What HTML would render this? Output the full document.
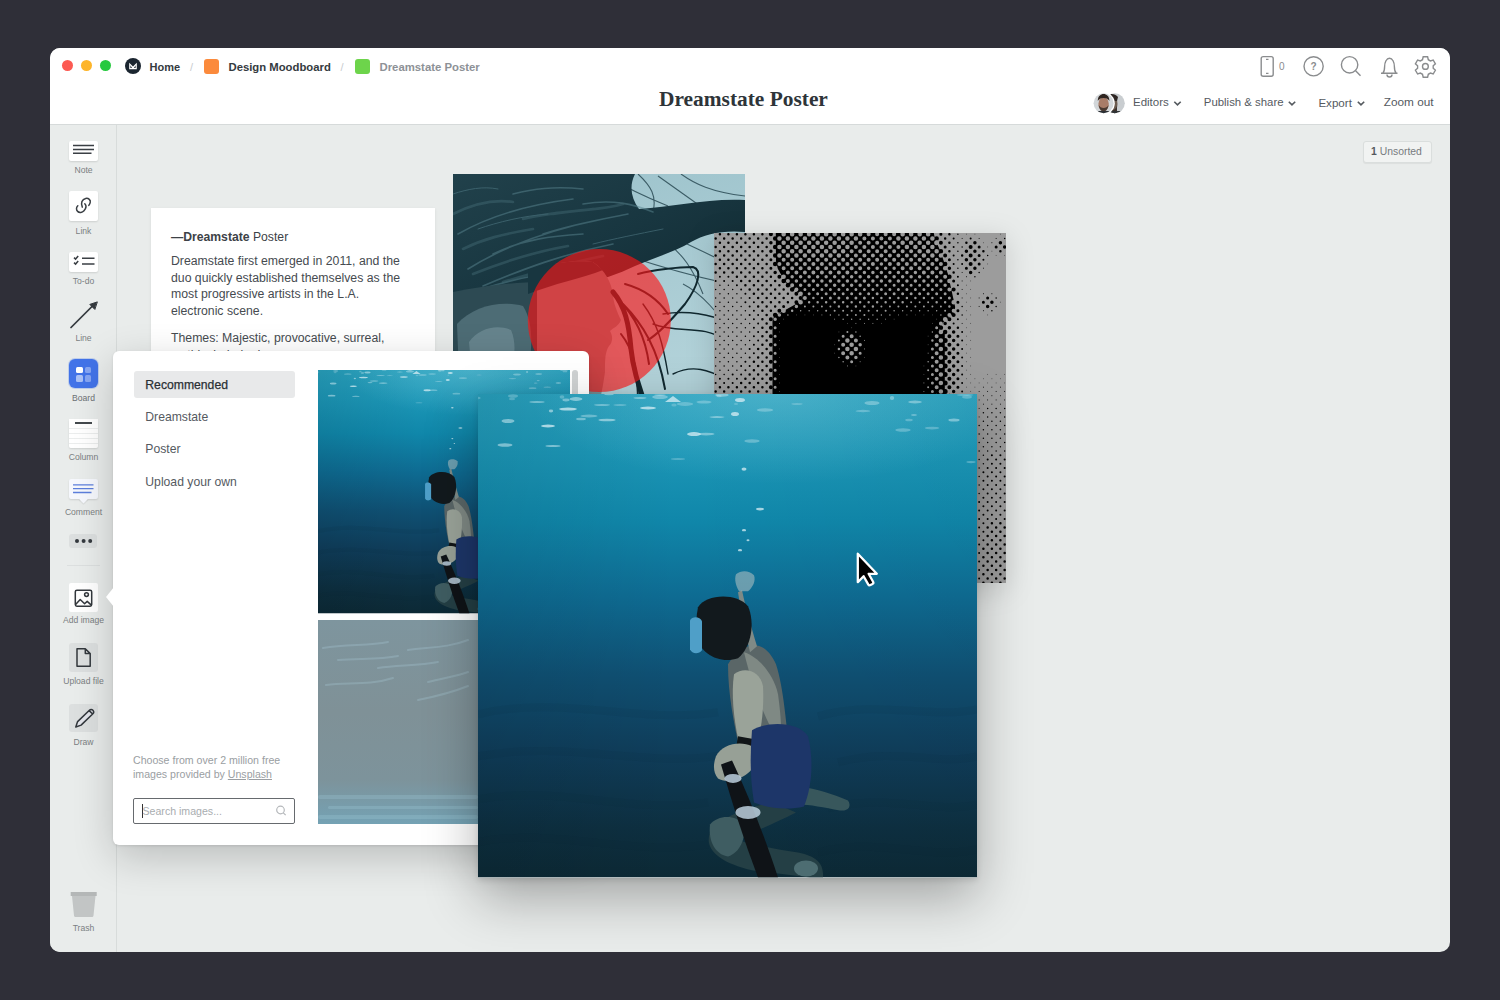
<!DOCTYPE html>
<html><head><meta charset="utf-8">
<style>
*{box-sizing:border-box}
html,body{margin:0;padding:0}
body{width:1500px;height:1000px;background:#2f2f38;overflow:hidden;position:relative;font-family:"Liberation Sans",sans-serif}
.a{position:absolute}
#win{position:absolute;left:0;top:0;width:1500px;height:1000px;clip-path:inset(48px 50px 48px 50px round 10px);background:#e9eceb}
.t{position:absolute;white-space:nowrap;line-height:1}
.tool{position:absolute;left:69px;width:29px;border-radius:2px;background:#fff;box-shadow:0 1px 2px rgba(0,0,0,.12)}
.lbl{position:absolute;left:50px;width:67px;text-align:center;font-size:8.6px;color:#7b7f82;line-height:1;white-space:nowrap}
</style></head>
<body>
<div id="win">
  <!-- header -->
  <div class="a" style="left:50px;top:48px;width:1400px;height:77px;background:#fff;border-bottom:1px solid #d6dada"></div>
  <!-- traffic lights -->
  <div class="a" style="left:62px;top:60px;width:11px;height:11px;border-radius:50%;background:#fc5a52"></div>
  <div class="a" style="left:81px;top:60px;width:11px;height:11px;border-radius:50%;background:#fdb52a"></div>
  <div class="a" style="left:99.5px;top:60px;width:11px;height:11px;border-radius:50%;background:#27c93f"></div>
  <!-- logo -->
  <svg class="a" style="left:125px;top:58px" width="16" height="16" viewBox="0 0 16 16"><circle cx="8" cy="8" r="8" fill="#1b2530"/><path d="M4.2 4.8 L8 8.6 L11.8 4.8 V11.2 H4.2 Z M5.4 7.2 V10 H7 Z M10.6 7.2 V10 H9 Z" fill="#fff" fill-rule="evenodd"/></svg>
  <div class="t" style="left:149.5px;top:62px;font-size:11px;font-weight:bold;color:#343a40">Home</div>
  <div class="t" style="left:190px;top:62px;font-size:11px;color:#c9cccf">/</div>
  <div class="a" style="left:204px;top:59px;width:15px;height:15px;border-radius:3px;background:#fb8a3c"></div>
  <div class="t" style="left:228.5px;top:62px;font-size:11.3px;font-weight:bold;color:#343a40">Design Moodboard</div>
  <div class="t" style="left:340.5px;top:62px;font-size:11px;color:#c9cccf">/</div>
  <div class="a" style="left:355px;top:59px;width:15px;height:15px;border-radius:3px;background:#6dd44b"></div>
  <div class="t" style="left:379.5px;top:62px;font-size:11.35px;font-weight:bold;color:#8d9196">Dreamstate Poster</div>
  <!-- title -->
  <div class="t" style="left:659px;top:89px;font-size:21.4px;font-weight:bold;font-family:'Liberation Serif',serif;color:#2e3439">Dreamstate Poster</div>

  <!-- right icons -->
  <svg class="a" style="left:1250px;top:50px" width="200" height="35" viewBox="1250 50 200 35" fill="none" stroke="#8a8c8e" stroke-width="1.4">
    <rect x="1261.2" y="56.6" width="12" height="19.6" rx="2"/>
    <path d="M1266 59.4h2.5M1266 73.4h2.5" stroke-width="1.1"/>
    <circle cx="1313.6" cy="66.3" r="9.6"/>
    <circle cx="1349.6" cy="64.8" r="8.2"/>
    <path d="M1355.6 70.8L1360.5 75.7"/>
    <path d="M1381 73.2h16.5M1382.8 73.2c1.5-1.5 1.8-3 1.8-6.5c0-4.5 2-8.5 4.9-8.5s4.9 4 4.9 8.5c0 3.5.3 5 1.8 6.5M1387 74.5a2.3 2.3 0 0 0 5 0"/>
    <path d="M1423.2 56.8h4.4l.7 2.9 2.1 1.2 2.8-.9 2.2 3.8-2.2 2v2.4l2.2 2-2.2 3.8-2.8-.9-2.1 1.2-.7 2.9h-4.4l-.7-2.9-2.1-1.2-2.8.9-2.2-3.8 2.2-2v-2.4l-2.2-2 2.2-3.8 2.8.9 2.1-1.2z"/>
    <circle cx="1425.4" cy="66.4" r="2.9"/>
  </svg>
  <div class="t" style="left:1279px;top:62px;font-size:10px;color:#8a8c8e">0</div>
  <div class="t" style="left:1310.4px;top:61.5px;font-size:10px;font-weight:bold;color:#8a8c8e">?</div>

  <!-- row 2 -->
  <svg class="a" style="left:1090px;top:90px" width="40" height="26" viewBox="1090 90 40 26">
    <defs><clipPath id="av2"><circle cx="1114.8" cy="103.3" r="10"/></clipPath><clipPath id="av1"><circle cx="1103.6" cy="103.3" r="10"/></clipPath></defs>
    <g clip-path="url(#av2)"><rect x="1100" y="90" width="30" height="26" fill="#c9cdd0"/><ellipse cx="1112" cy="104" rx="5.5" ry="8" fill="#6b5a4e"/><path d="M1105 97c3-4 10-4 13 0l-1 4h-11z" fill="#2e2623"/><path d="M1106 106c2 5 9 6 11 0v8h-11z" fill="#3b302b"/><rect x="1103" y="111" width="20" height="6" fill="#2f3336"/></g>
    <circle cx="1103.6" cy="103.3" r="11.2" fill="#fff"/>
    <g clip-path="url(#av1)"><rect x="1090" y="90" width="30" height="26" fill="#d2d6d9"/><ellipse cx="1103.6" cy="104" rx="5.2" ry="6.6" fill="#a87c68"/><path d="M1097.8 101c0-5 3-7 5.8-7s5.8 2 5.8 7c-1-2-3-3-5.8-3s-4.8 1-5.8 3z" fill="#2f2520"/><path d="M1098.6 105c1 5 3 6.5 5 6.5s4-1.5 5-6.5c-1 2-3 3-5 3s-4-1-5-3z" fill="#4a3a32"/><rect x="1093" y="111" width="22" height="6" fill="#2c3034"/></g>
  </svg>
  <div class="t" style="left:1133px;top:97px;font-size:11.5px;color:#555a5f">Editors</div>
  <div class="t" style="left:1203.8px;top:97px;font-size:11.4px;color:#555a5f">Publish &amp; share</div>
  <div class="t" style="left:1318.4px;top:97px;font-size:11.6px;color:#555a5f">Export</div>
  <div class="t" style="left:1383.8px;top:97px;font-size:11.8px;color:#555a5f">Zoom out</div>
  <svg class="a" style="left:1170px;top:98px" width="200" height="12" viewBox="1170 98 200 12" fill="none" stroke="#555a5f" stroke-width="1.6">
    <path d="M1174.3 101.8l3.2 3.1 3.2-3.1M1288.8 101.8l3.2 3.1 3.2-3.1M1357.8 101.8l3.2 3.1 3.2-3.1"/>
  </svg>

  <!-- unsorted -->
  <div class="a" style="left:1363.3px;top:141px;width:69px;height:22px;border-radius:3px;background:#f1f3f2;border:1px solid #dadedd;box-shadow:0 1px 1px rgba(0,0,0,.06)"></div>
  <div class="t" style="left:1371px;top:147px;font-size:10.4px;color:#777b7f"><b style="color:#55595d">1</b> Unsorted</div>

  <!-- sidebar -->
  <div class="a" style="left:50px;top:125px;width:67px;height:827px;background:#e9eceb;border-right:1px solid #d8dcdb"></div>

  <!-- sidebar tools -->
  <div class="tool" style="top:140.5px;height:20.5px"></div>
  <svg class="a" style="left:72px;top:143px" width="24" height="13" viewBox="72 143 24 13" stroke="#3a3f44" stroke-width="1.5"><path d="M73 145.4h21M73 149.6h21M73 153.3h18.5"/></svg>
  <div class="lbl" style="top:166px">Note</div>

  <div class="tool" style="top:191px;height:30px"></div>
  <svg class="a" style="left:72px;top:194px" width="22" height="22" viewBox="72 194 22 22" fill="none" stroke="#3a3f44" stroke-width="1.5" stroke-linecap="round"><path d="M82.3 207.1C80.5 203.2 82 199.2 85.7 198.4C88.5 197.9 91 200 90.2 202.6C89.9 203.8 89.4 204.6 88.8 205.4"/><path d="M77.8 205.7C76.2 207.2 76 210 77.6 211.4C79.3 213.1 82.3 212.6 84 210.7C86.2 208.2 86.5 205.5 84.8 203.8"/></svg>
  <div class="lbl" style="top:227px">Link</div>

  <div class="tool" style="top:251.5px;height:20.5px"></div>
  <svg class="a" style="left:72px;top:254px" width="24" height="16" viewBox="72 254 24 16" fill="none" stroke="#3a3f44" stroke-width="1.5"><path d="M74 257.6l1.6 1.5 2.6-3M74 262.6l1.6 1.5 2.6-3M82 258.3h12.5M82 264h12.5"/></svg>
  <div class="lbl" style="top:277px">To-do</div>

  <svg class="a" style="left:66px;top:298px" width="36" height="34" viewBox="66 298 36 34" fill="none" stroke="#33383d" stroke-width="1.7" stroke-linecap="round"><path d="M71 327.5L94 304.5"/><path d="M97 302l-7.2 2.4l4.8 4.8z" fill="#33383d" stroke-width="1"/></svg>
  <div class="lbl" style="top:334px">Line</div>

  <div class="a" style="left:68.8px;top:358.8px;width:29.7px;height:29.7px;border-radius:6px;background:#4273e8;box-shadow:0 0 0 1px rgba(66,115,232,.25)"></div>
  <div class="a" style="left:76px;top:366.5px;width:6.5px;height:6.5px;border-radius:1.5px;background:#fff"></div>
  <div class="a" style="left:84.8px;top:366.5px;width:6.5px;height:6.5px;border-radius:1.5px;background:#86a5f2"></div>
  <div class="a" style="left:76px;top:375.3px;width:6.5px;height:6.5px;border-radius:1.5px;background:#aac1f6"></div>
  <div class="a" style="left:84.8px;top:375.3px;width:6.5px;height:6.5px;border-radius:1.5px;background:#86a5f2"></div>
  <div class="lbl" style="top:394px;color:#6c7074">Board</div>

  <div class="tool" style="top:418.8px;height:29.7px;background:repeating-linear-gradient(#fff 0,#fff 4px,#ebeded 4px,#ebeded 5px)"></div>
  <div class="a" style="left:69px;top:418.8px;width:29px;height:7px;background:#fff"></div>
  <div class="a" style="left:75px;top:422px;width:17px;height:1.6px;background:#44494d"></div>
  <div class="lbl" style="top:453px">Column</div>

  <div class="tool" style="left:69.3px;width:28.7px;top:479px;height:20px;background:#f6f8fd"></div>
  <div class="a" style="left:80px;top:495px;width:7px;height:7px;background:#f6f8fd;transform:rotate(45deg);box-shadow:1px 1px 1px rgba(0,0,0,.08)"></div>
  <svg class="a" style="left:72px;top:482px" width="24" height="13" viewBox="72 482 24 13" stroke="#5d7fdc" stroke-width="1.3"><path d="M73 484.8h20.5M73 488.6h20.5M73 492.5h18.5"/></svg>
  <div class="lbl" style="top:508px">Comment</div>

  <div class="a" style="left:69.3px;top:534.3px;width:28px;height:13.7px;border-radius:3px;background:#dcdfdf"></div>
  <svg class="a" style="left:72px;top:536px" width="24" height="10" viewBox="72 536 24 10" fill="#353a3f"><circle cx="77" cy="541" r="2"/><circle cx="83.6" cy="541" r="2"/><circle cx="90.2" cy="541" r="2"/></svg>
  <div class="a" style="left:67px;top:565px;width:33px;height:1px;background:#dcdfdf"></div>

  <div class="tool" style="top:583.2px;height:29.2px;box-shadow:none"></div>
  <svg class="a" style="left:74px;top:589px" width="19" height="19" viewBox="74 589 19 19" fill="none" stroke="#33383d" stroke-width="1.5" stroke-linejoin="round"><rect x="75.3" y="590.2" width="16.4" height="16"  rx="1.6"/><circle cx="86.5" cy="594.6" r="1.9"/><path d="M75.6 604.6l4.6-5.1 4.4 4.2 2.6-2.3 4.4 4"/></svg>
  <div class="lbl" style="top:616px">Add image</div>

  <div class="a" style="left:68.8px;top:643.2px;width:29px;height:28.6px;border-radius:3px;background:#dcdfdf"></div>
  <svg class="a" style="left:75px;top:647px" width="17" height="21" viewBox="75 647 17 21" fill="none" stroke="#33383d" stroke-width="1.5" stroke-linejoin="round"><path d="M77 648.7h8.3l4.9 4.9v12.6H77z M85.3 648.7v4.9h4.9"/></svg>
  <div class="lbl" style="top:677px">Upload file</div>

  <div class="a" style="left:69.4px;top:704px;width:28.3px;height:28px;border-radius:3px;background:#dcdfdf"></div>
  <svg class="a" style="left:74px;top:708px" width="21" height="21" viewBox="74 708 21 21" fill="#e2e4ea" stroke="#33383d" stroke-width="1.5" stroke-linejoin="round"><path d="M75.8 727l1.8-5.4 11.8-11.4c1-1 2.6-1 3.5 0s1 2.5 0 3.5l-11.8 11.4z M89.2 710.6l3.4 3.4"/></svg>
  <div class="lbl" style="top:738px">Draw</div>

  <svg class="a" style="left:70px;top:891px" width="28" height="27" viewBox="70 891 28 27"><path d="M70.7 892h26v4h-26z" fill="#b4b7b7"/><path d="M72 896h23.5l-2 19.5c-.1 1-.9 1.5-1.8 1.5h-15.9c-.9 0-1.7-.5-1.8-1.5z" fill="#c2c5c5"/></svg>
  <div class="lbl" style="top:924px">Trash</div>

  <!-- note card -->
  <div class="a" style="left:151px;top:208px;width:283.5px;height:200px;background:#fff;box-shadow:0 1px 3px rgba(0,0,0,.08)"></div>
  <div class="t" style="left:171px;top:231px;font-size:12.2px;color:#3d4247"><b>—Dreamstate</b> Poster</div>
  <div class="a" style="left:171px;top:252.6px;width:240px;font-size:12.27px;line-height:16.9px;color:#464b50">Dreamstate first emerged in 2011, and the duo quickly established themselves as the most progressive artists in the L.A. electronic scene.</div>
  <div class="t" style="left:171px;top:331.5px;font-size:12.27px;color:#464b50">Themes: Majestic, provocative, surreal,</div>
  <div class="t" style="left:171px;top:348.5px;font-size:12.27px;color:#464b50">mythical, dark, dreamy</div>

  <!-- woman image -->
  <svg class="a" style="left:453px;top:174px" width="292" height="230" viewBox="0 0 292 230">
    <defs>
      <linearGradient id="wbg" x1="0" y1="0" x2="0.3" y2="1">
        <stop offset="0" stop-color="#9cc2cb"/><stop offset="1" stop-color="#b2d2d9"/>
      </linearGradient>
      <linearGradient id="whair" x1="0" y1="0" x2="1" y2="1">
        <stop offset="0" stop-color="#21414b"/><stop offset="0.5" stop-color="#183640"/><stop offset="1" stop-color="#10282f"/>
      </linearGradient>
    </defs>
    <rect width="292" height="230" fill="url(#wbg)"/>
    <g stroke="#2a4a53" stroke-width="1.1" fill="none" opacity=".85">
      <path d="M150 0C175 15 190 22 215 32M185 0C198 12 204 22 200 38M205 2L250 34M228 0C242 10 258 18 292 22M150 30C200 55 240 72 292 98M175 82C205 92 240 102 268 108M210 65C230 80 240 95 250 120M230 110C250 120 265 140 280 160"/>
    </g>
    <path d="M0 0H182C176 12 178 24 186 35C220 33 255 24 292 26V58C270 56 252 60 238 68C222 78 200 84 182 92C165 100 148 106 130 110C100 116 70 120 40 126C25 130 10 136 0 142Z" fill="url(#whair)"/>
    <g stroke="#5a8590" fill="none" opacity=".5" stroke-linecap="round">
      <path d="M5 60C40 40 80 30 120 25M15 95C55 70 100 55 150 45M30 112C70 95 110 80 160 70M60 20C80 15 100 12 130 15M90 60C120 50 150 45 175 40M0 125C40 110 80 100 120 96M40 80C70 65 100 62 130 60M130 30C160 25 180 30 200 38" stroke-width="1.6"/>
      <path d="M0 40C20 30 40 25 60 28M10 75C30 65 50 60 80 55M20 100C50 88 80 78 115 72M50 108C90 96 120 88 150 82M100 40C130 35 150 36 170 30M70 45C90 40 110 38 140 35" stroke-width="2.6" opacity=".6"/>
      <path d="M0 20C15 15 30 12 45 15M140 70C160 65 185 60 210 55M25 55C45 48 70 42 95 40" stroke-width="1"/>
    </g>
    <path d="M0 118C30 112 60 108 90 108L95 230H0Z" fill="#2d4a53"/>
    <path d="M4 150C20 132 48 126 70 132C82 150 80 185 70 212C50 222 20 218 6 200Z" fill="#4d6c75"/>
    <path d="M16 168C26 154 44 150 58 156C64 170 62 188 54 198C42 204 26 200 18 190Z" fill="#6d8b93" opacity=".8"/>
    <path d="M84 96C100 88 125 86 140 88C152 96 158 108 160 120C160 128 164 138 168 146C166 152 160 154 157 157C160 162 160 168 156 172C152 178 152 186 152 198C150 212 148 222 146 230H84Z" fill="#7c969c"/>
    <path d="M75 96C100 88 125 86 140 88L150 96C130 104 100 110 75 120Z" fill="#183640"/>
    <g stroke="#10282f" fill="none" stroke-linecap="round">
      <path d="M160 118C172 132 176 150 178 175C180 195 186 212 192 230" stroke-width="5"/>
      <path d="M165 125C180 140 192 160 196 190M170 130C190 150 205 175 212 215M168 160C180 175 185 195 185 230M172 110C190 115 205 125 215 140" stroke-width="2"/>
      <path d="M185 100C200 96 225 93 240 93C250 96 245 112 232 130C215 150 205 160 195 166" stroke-width="2"/>
      <path d="M200 150C225 160 250 150 272 166M210 140C235 136 255 140 282 150M220 200C240 190 255 196 276 206M190 130C205 150 210 170 215 200" stroke-width="1.4"/>
    </g>
    <circle cx="146.3" cy="146.5" r="71.5" fill="#ff1414" opacity=".64"/>
  </svg>

  <!-- halftone image -->
  <svg class="a" style="left:713.6px;top:232.8px;filter:drop-shadow(0 6px 14px rgba(0,0,0,.15))" width="292.4" height="350.5" viewBox="0 0 292.4 350.5">
    <rect width="292.4" height="350.5" fill="#9c9c9c"/>
    <g stroke-linecap="round">
<path fill="#000" fill-rule="evenodd" d="M61.8 0.0 62.0 28.2 63.8 35.8 71.5 49.5 85.8 60.8 88.2 63.5 88.5 65.8 85.2 69.2 61.8 82.2 59.5 84.8 58.5 88.0 58.5 350.8 230.8 350.8 230.8 100.0 225.0 96.5 229.8 88.8 240.0 80.0 241.2 74.0 234.0 41.2 227.0 19.8 220.8 5.0 219.8 0.0Z"/>
<path stroke="#000" stroke-width="0.5" d="M256.65 -3.05h0M252.40 1.20h0M260.90 1.20h0M286.40 1.20h0M269.40 9.70h0M273.65 13.95h0M277.90 18.20h0M282.15 22.45h0M290.65 22.45h0M273.65 30.95h0M256.65 47.95h0M252.40 52.20h0M256.65 56.45h0M252.40 60.70h0M256.65 64.95h0M252.40 69.20h0M286.40 69.20h0M256.65 73.45h0M252.40 77.70h0M256.65 81.95h0M273.65 81.95h0M252.40 86.20h0M256.65 90.45h0M252.40 94.70h0M256.65 98.95h0M252.40 103.20h0M256.65 107.45h0M252.40 111.70h0M256.65 115.95h0M252.40 120.20h0M256.65 124.45h0M252.40 128.70h0M256.65 132.95h0M252.40 137.20h0M256.65 141.45h0M273.65 141.45h0M282.15 141.45h0M290.65 141.45h0M252.40 145.70h0M260.90 145.70h0M269.40 145.70h0M277.90 145.70h0M286.40 145.70h0M294.90 145.70h0M256.65 149.95h0M265.15 149.95h0M273.65 149.95h0M282.15 149.95h0M290.65 149.95h0M252.40 154.20h0M260.90 154.20h0M256.65 158.45h0M252.40 162.70h0"/>
<path stroke="#000" stroke-width="1" d="M248.15 -3.05h0M248.15 5.45h0M265.15 5.45h0M282.15 5.45h0M277.90 9.70h0M269.40 35.20h0M248.15 39.45h0M252.40 43.70h0M248.15 47.95h0M248.15 56.45h0M269.40 60.70h0M277.90 60.70h0M248.15 64.95h0M265.15 64.95h0M265.15 73.45h0M269.40 77.70h0M248.15 90.45h0M269.40 154.20h0M277.90 154.20h0M286.40 154.20h0M294.90 154.20h0M265.15 158.45h0M273.65 158.45h0M282.15 158.45h0M290.65 158.45h0M260.90 162.70h0M269.40 162.70h0M277.90 162.70h0M286.40 162.70h0M294.90 162.70h0M265.15 166.95h0M273.65 166.95h0M282.15 166.95h0M290.65 166.95h0M260.90 171.20h0M269.40 171.20h0M277.90 171.20h0M286.40 171.20h0M294.90 171.20h0M265.15 175.45h0M260.90 179.70h0M265.15 183.95h0M260.90 188.20h0M260.90 196.70h0M260.90 205.20h0M260.90 213.70h0M260.90 222.20h0M260.90 230.70h0"/>
<path stroke="#000" stroke-width="1.5" d="M243.90 1.20h0M290.65 5.45h0M243.90 9.70h0M248.15 13.95h0M243.90 18.20h0M273.65 22.45h0M243.90 26.70h0M243.90 35.20h0M265.15 39.45h0M260.90 43.70h0M-2.60 52.20h0M5.90 52.20h0M14.40 52.20h0M1.65 56.45h0M10.15 56.45h0M18.65 56.45h0M-2.60 60.70h0M5.90 60.70h0M14.40 60.70h0M22.90 60.70h0M1.65 64.95h0M10.15 64.95h0M18.65 64.95h0M27.15 64.95h0M282.15 64.95h0M-2.60 69.20h0M5.90 69.20h0M14.40 69.20h0M22.90 69.20h0M1.65 73.45h0M10.15 73.45h0M18.65 73.45h0M27.15 73.45h0M248.15 73.45h0M282.15 73.45h0M-2.60 77.70h0M5.90 77.70h0M14.40 77.70h0M22.90 77.70h0M31.40 77.70h0M277.90 77.70h0M1.65 81.95h0M10.15 81.95h0M18.65 81.95h0M27.15 81.95h0M248.15 81.95h0M-2.60 86.20h0M5.90 86.20h0M14.40 86.20h0M22.90 86.20h0M31.40 86.20h0M1.65 90.45h0M10.15 90.45h0M18.65 90.45h0M27.15 90.45h0M35.65 90.45h0M-2.60 94.70h0M5.90 94.70h0M14.40 94.70h0M22.90 94.70h0M31.40 94.70h0M1.65 98.95h0M10.15 98.95h0M18.65 98.95h0M27.15 98.95h0M35.65 98.95h0M-2.60 103.20h0M5.90 103.20h0M14.40 103.20h0M22.90 103.20h0M31.40 103.20h0M1.65 107.45h0M10.15 107.45h0M18.65 107.45h0M27.15 107.45h0M35.65 107.45h0M-2.60 111.70h0M5.90 111.70h0M14.40 111.70h0M22.90 111.70h0M31.40 111.70h0M1.65 115.95h0M10.15 115.95h0M18.65 115.95h0M27.15 115.95h0M-2.60 120.20h0M5.90 120.20h0M14.40 120.20h0M22.90 120.20h0M31.40 120.20h0M1.65 124.45h0M10.15 124.45h0M18.65 124.45h0M27.15 124.45h0M-2.60 128.70h0M5.90 128.70h0M14.40 128.70h0M22.90 128.70h0M1.65 132.95h0M10.15 132.95h0M18.65 132.95h0M-2.60 137.20h0M5.90 137.20h0M14.40 137.20h0M22.90 137.20h0M1.65 141.45h0M10.15 141.45h0M273.65 175.45h0M282.15 175.45h0M290.65 175.45h0M269.40 179.70h0M277.90 179.70h0M286.40 179.70h0M294.90 179.70h0M273.65 183.95h0M282.15 183.95h0M290.65 183.95h0M269.40 188.20h0M277.90 188.20h0M286.40 188.20h0M294.90 188.20h0M265.15 192.45h0M273.65 192.45h0M282.15 192.45h0M290.65 192.45h0M269.40 196.70h0M277.90 196.70h0M286.40 196.70h0M294.90 196.70h0M265.15 200.95h0M273.65 200.95h0M282.15 200.95h0M290.65 200.95h0M269.40 205.20h0M277.90 205.20h0M286.40 205.20h0M294.90 205.20h0M265.15 209.45h0M273.65 209.45h0M282.15 209.45h0M290.65 209.45h0M269.40 213.70h0M277.90 213.70h0M286.40 213.70h0M294.90 213.70h0M265.15 217.95h0M273.65 217.95h0M282.15 217.95h0M290.65 217.95h0M269.40 222.20h0M265.15 226.45h0M269.40 230.70h0M265.15 234.95h0M260.90 239.20h0M265.15 243.45h0M260.90 247.70h0M265.15 251.95h0M260.90 256.20h0M265.15 260.45h0M260.90 264.70h0M260.90 273.20h0M260.90 281.70h0M260.90 290.20h0M260.90 298.70h0M260.90 307.20h0M260.90 315.70h0M260.90 324.20h0M260.90 332.70h0M260.90 341.20h0M260.90 349.70h0"/>
<path stroke="#000" stroke-width="2" d="M239.65 -3.05h0M239.65 5.45h0M256.65 5.45h0M239.65 13.95h0M294.90 18.20h0M239.65 22.45h0M269.40 26.70h0M239.65 30.95h0M248.15 30.95h0M-2.60 43.70h0M5.90 43.70h0M14.40 43.70h0M243.90 43.70h0M1.65 47.95h0M10.15 47.95h0M18.65 47.95h0M22.90 52.20h0M243.90 52.20h0M27.15 56.45h0M31.40 60.70h0M35.65 64.95h0M31.40 69.20h0M39.90 69.20h0M35.65 73.45h0M39.90 77.70h0M35.65 81.95h0M44.15 81.95h0M39.90 86.20h0M243.90 86.20h0M44.15 90.45h0M239.65 90.45h0M39.90 94.70h0M44.15 98.95h0M248.15 98.95h0M39.90 103.20h0M44.15 107.45h0M248.15 107.45h0M39.90 111.70h0M35.65 115.95h0M248.15 115.95h0M39.90 120.20h0M35.65 124.45h0M248.15 124.45h0M31.40 128.70h0M27.15 132.95h0M35.65 132.95h0M248.15 132.95h0M31.40 137.20h0M18.65 141.45h0M27.15 141.45h0M248.15 141.45h0M-2.60 145.70h0M5.90 145.70h0M14.40 145.70h0M22.90 145.70h0M1.65 149.95h0M10.15 149.95h0M18.65 149.95h0M248.15 149.95h0M248.15 158.45h0M277.90 222.20h0M286.40 222.20h0M294.90 222.20h0M273.65 226.45h0M282.15 226.45h0M290.65 226.45h0M277.90 230.70h0M286.40 230.70h0M294.90 230.70h0M273.65 234.95h0M282.15 234.95h0M290.65 234.95h0M269.40 239.20h0M277.90 239.20h0M286.40 239.20h0M294.90 239.20h0M273.65 243.45h0M282.15 243.45h0M290.65 243.45h0M269.40 247.70h0M277.90 247.70h0M286.40 247.70h0M294.90 247.70h0M273.65 251.95h0M282.15 251.95h0M290.65 251.95h0M269.40 256.20h0M277.90 256.20h0M286.40 256.20h0M294.90 256.20h0M273.65 260.45h0M282.15 260.45h0M290.65 260.45h0M269.40 264.70h0M277.90 264.70h0M286.40 264.70h0M294.90 264.70h0M265.15 268.95h0M273.65 268.95h0M282.15 268.95h0M290.65 268.95h0M269.40 273.20h0M277.90 273.20h0M286.40 273.20h0M294.90 273.20h0M265.15 277.45h0M273.65 277.45h0M282.15 277.45h0M290.65 277.45h0M269.40 281.70h0M277.90 281.70h0M286.40 281.70h0M294.90 281.70h0M265.15 285.95h0M273.65 285.95h0M282.15 285.95h0M290.65 285.95h0M269.40 290.20h0M265.15 294.45h0M269.40 298.70h0M265.15 302.95h0M269.40 307.20h0M265.15 311.45h0M265.15 319.95h0M265.15 328.45h0M265.15 336.95h0M265.15 345.45h0M265.15 353.95h0"/>
<path stroke="#000" stroke-width="2.5" d="M1.65 -3.05h0M10.15 -3.05h0M18.65 -3.05h0M27.15 -3.05h0M35.65 -3.05h0M44.15 -3.05h0M52.65 -3.05h0M231.15 -3.05h0M-2.60 1.20h0M5.90 1.20h0M14.40 1.20h0M22.90 1.20h0M31.40 1.20h0M39.90 1.20h0M48.40 1.20h0M235.40 1.20h0M1.65 5.45h0M10.15 5.45h0M18.65 5.45h0M27.15 5.45h0M35.65 5.45h0M44.15 5.45h0M52.65 5.45h0M231.15 5.45h0M-2.60 9.70h0M5.90 9.70h0M14.40 9.70h0M22.90 9.70h0M31.40 9.70h0M39.90 9.70h0M48.40 9.70h0M235.40 9.70h0M252.40 9.70h0M1.65 13.95h0M10.15 13.95h0M18.65 13.95h0M27.15 13.95h0M35.65 13.95h0M44.15 13.95h0M52.65 13.95h0M-2.60 18.20h0M5.90 18.20h0M14.40 18.20h0M22.90 18.20h0M31.40 18.20h0M39.90 18.20h0M48.40 18.20h0M235.40 18.20h0M269.40 18.20h0M286.40 18.20h0M1.65 22.45h0M10.15 22.45h0M18.65 22.45h0M27.15 22.45h0M35.65 22.45h0M44.15 22.45h0M52.65 22.45h0M248.15 22.45h0M-2.60 26.70h0M5.90 26.70h0M14.40 26.70h0M22.90 26.70h0M31.40 26.70h0M39.90 26.70h0M48.40 26.70h0M1.65 30.95h0M10.15 30.95h0M18.65 30.95h0M27.15 30.95h0M35.65 30.95h0M44.15 30.95h0M52.65 30.95h0M-2.60 35.20h0M5.90 35.20h0M14.40 35.20h0M22.90 35.20h0M31.40 35.20h0M39.90 35.20h0M48.40 35.20h0M1.65 39.45h0M10.15 39.45h0M18.65 39.45h0M27.15 39.45h0M35.65 39.45h0M44.15 39.45h0M52.65 39.45h0M239.65 39.45h0M22.90 43.70h0M31.40 43.70h0M39.90 43.70h0M48.40 43.70h0M56.90 43.70h0M27.15 47.95h0M35.65 47.95h0M44.15 47.95h0M52.65 47.95h0M61.15 47.95h0M31.40 52.20h0M39.90 52.20h0M48.40 52.20h0M56.90 52.20h0M65.40 52.20h0M35.65 56.45h0M44.15 56.45h0M52.65 56.45h0M61.15 56.45h0M69.65 56.45h0M39.90 60.70h0M48.40 60.70h0M56.90 60.70h0M65.40 60.70h0M73.90 60.70h0M243.90 60.70h0M44.15 64.95h0M52.65 64.95h0M61.15 64.95h0M69.65 64.95h0M78.15 64.95h0M48.40 69.20h0M56.90 69.20h0M65.40 69.20h0M73.90 69.20h0M44.15 73.45h0M52.65 73.45h0M61.15 73.45h0M48.40 77.70h0M56.90 77.70h0M52.65 81.95h0M48.40 86.20h0M52.65 90.45h0M48.40 94.70h0M243.90 94.70h0M52.65 98.95h0M48.40 103.20h0M52.65 107.45h0M48.40 111.70h0M44.15 115.95h0M52.65 115.95h0M48.40 120.20h0M44.15 124.45h0M52.65 124.45h0M39.90 128.70h0M48.40 128.70h0M44.15 132.95h0M52.65 132.95h0M39.90 137.20h0M48.40 137.20h0M35.65 141.45h0M44.15 141.45h0M52.65 141.45h0M31.40 145.70h0M39.90 145.70h0M48.40 145.70h0M27.15 149.95h0M35.65 149.95h0M44.15 149.95h0M52.65 149.95h0M-2.60 154.20h0M5.90 154.20h0M14.40 154.20h0M22.90 154.20h0M31.40 154.20h0M39.90 154.20h0M48.40 154.20h0M1.65 158.45h0M10.15 158.45h0M18.65 158.45h0M27.15 158.45h0M35.65 158.45h0M44.15 158.45h0M52.65 158.45h0M-2.60 162.70h0M5.90 162.70h0M14.40 162.70h0M22.90 162.70h0M31.40 162.70h0M39.90 162.70h0M48.40 162.70h0M277.90 290.20h0M286.40 290.20h0M294.90 290.20h0M273.65 294.45h0M282.15 294.45h0M290.65 294.45h0M277.90 298.70h0M286.40 298.70h0M294.90 298.70h0M273.65 302.95h0M282.15 302.95h0M290.65 302.95h0M277.90 307.20h0M286.40 307.20h0M294.90 307.20h0M273.65 311.45h0M282.15 311.45h0M290.65 311.45h0M269.40 315.70h0M277.90 315.70h0M286.40 315.70h0M294.90 315.70h0M273.65 319.95h0M282.15 319.95h0M290.65 319.95h0M269.40 324.20h0M277.90 324.20h0M286.40 324.20h0M294.90 324.20h0M273.65 328.45h0M282.15 328.45h0M290.65 328.45h0M269.40 332.70h0M277.90 332.70h0M286.40 332.70h0M294.90 332.70h0M273.65 336.95h0M282.15 336.95h0M290.65 336.95h0M269.40 341.20h0M277.90 341.20h0M286.40 341.20h0M294.90 341.20h0M273.65 345.45h0M282.15 345.45h0M290.65 345.45h0M269.40 349.70h0M277.90 349.70h0M286.40 349.70h0M294.90 349.70h0M273.65 353.95h0M282.15 353.95h0M290.65 353.95h0"/>
<path stroke="#000" stroke-width="3" d="M226.90 1.20h0M294.90 9.70h0M231.15 13.95h0M265.15 13.95h0M282.15 13.95h0M265.15 22.45h0M56.90 26.70h0M235.40 26.70h0M265.15 30.95h0M56.90 35.20h0M252.40 35.20h0M239.65 47.95h0M273.65 64.95h0M243.90 69.20h0M269.40 69.20h0M69.65 73.45h0M243.90 77.70h0M243.90 103.20h0M243.90 111.70h0M243.90 120.20h0M243.90 128.70h0M243.90 137.20h0M243.90 145.70h0M243.90 154.20h0M243.90 162.70h0"/>
<path stroke="#000" stroke-width="3.5" d="M56.90 9.70h0M260.90 9.70h0M286.40 9.70h0M290.65 13.95h0M56.90 18.20h0M252.40 18.20h0M260.90 18.20h0M252.40 26.70h0M260.90 26.70h0M235.40 35.20h0M260.90 35.20h0M61.15 39.45h0M256.65 39.45h0M277.90 69.20h0M273.65 73.45h0M231.15 90.45h0M235.40 94.70h0M239.65 98.95h0M239.65 107.45h0M239.65 115.95h0M239.65 124.45h0M239.65 132.95h0M239.65 141.45h0M239.65 149.95h0M239.65 158.45h0"/>
<path stroke="#000" stroke-width="4" d="M56.90 1.20h0M226.90 9.70h0M256.65 13.95h0M231.15 22.45h0M256.65 22.45h0M256.65 30.95h0M65.40 43.70h0M239.65 56.45h0M82.40 60.70h0M86.65 64.95h0M82.40 69.20h0M65.40 77.70h0M239.65 81.95h0M56.90 86.20h0M235.40 86.20h0M56.90 94.70h0M56.90 103.20h0M235.40 103.20h0M56.90 111.70h0M235.40 111.70h0M56.90 120.20h0M235.40 120.20h0M56.90 128.70h0M235.40 128.70h0M56.90 137.20h0M235.40 137.20h0M56.90 145.70h0M235.40 145.70h0M56.90 154.20h0M235.40 154.20h0M56.90 162.70h0M235.40 162.70h0"/>
<path stroke="#000" stroke-width="4.5" d="M61.15 -3.05h0M222.65 -3.05h0M61.15 5.45h0M222.65 5.45h0M61.15 13.95h0M226.90 18.20h0M61.15 22.45h0M61.15 30.95h0M231.15 30.95h0M235.40 43.70h0M69.65 47.95h0M73.90 52.20h0M78.15 56.45h0M61.15 81.95h0M226.90 94.70h0M231.15 98.95h0"/>
<path stroke="#000" stroke-width="5" d="M231.15 107.45h0M231.15 115.95h0M231.15 124.45h0M231.15 132.95h0M231.15 141.45h0M231.15 149.95h0M231.15 158.45h0"/>
<path stroke="#9c9c9c" stroke-width="0.5" d="M82.40 81.95h0M90.90 81.95h0M99.40 81.95h0M201.40 81.95h0M209.90 81.95h0M218.40 81.95h0M69.65 86.20h0M180.15 86.20h0M222.65 86.20h0M133.40 90.45h0M167.40 90.45h0M218.40 90.45h0M137.65 94.70h0M65.40 98.95h0M124.90 98.95h0M214.15 103.20h0M65.40 107.45h0M120.65 111.70h0M214.15 111.70h0M65.40 115.95h0M120.65 120.20h0M65.40 124.45h0M150.40 124.45h0M65.40 132.95h0M141.90 132.95h0M209.90 132.95h0M65.40 141.45h0M209.90 141.45h0M65.40 149.95h0M65.40 158.45h0"/>
<path stroke="#9c9c9c" stroke-width="1" d="M107.90 81.95h0M184.40 81.95h0M192.90 81.95h0M120.65 86.20h0M171.65 86.20h0M65.40 90.45h0M141.90 90.45h0M150.40 90.45h0M158.90 90.45h0M150.40 107.45h0M150.40 115.95h0M214.15 120.20h0M146.15 128.70h0M133.40 132.95h0M209.90 149.95h0M209.90 158.45h0"/>
<path stroke="#9c9c9c" stroke-width="1.5" d="M86.65 77.70h0M95.15 77.70h0M103.65 77.70h0M180.15 77.70h0M188.65 77.70h0M197.15 77.70h0M205.65 77.70h0M214.15 77.70h0M222.65 77.70h0M73.90 81.95h0M116.40 81.95h0M124.90 81.95h0M158.90 81.95h0M167.40 81.95h0M175.90 81.95h0M226.90 81.95h0M129.15 86.20h0M137.65 86.20h0M146.15 86.20h0M154.65 86.20h0M163.15 86.20h0M141.90 98.95h0M218.40 98.95h0M146.15 103.20h0M124.90 124.45h0M129.15 128.70h0M214.15 128.70h0"/>
<path stroke="#9c9c9c" stroke-width="2" d="M197.15 69.20h0M205.65 69.20h0M214.15 69.20h0M90.90 73.45h0M99.40 73.45h0M107.90 73.45h0M116.40 73.45h0M167.40 73.45h0M175.90 73.45h0M184.40 73.45h0M192.90 73.45h0M201.40 73.45h0M209.90 73.45h0M218.40 73.45h0M226.90 73.45h0M112.15 77.70h0M120.65 77.70h0M129.15 77.70h0M137.65 77.70h0M146.15 77.70h0M154.65 77.70h0M163.15 77.70h0M171.65 77.70h0M231.15 77.70h0M133.40 81.95h0M141.90 81.95h0M150.40 81.95h0M133.40 98.95h0M124.90 107.45h0M214.15 137.20h0M214.15 145.70h0M214.15 154.20h0M214.15 162.70h0"/>
<path stroke="#9c9c9c" stroke-width="2.5" d="M99.40 64.95h0M107.90 64.95h0M158.90 64.95h0M167.40 64.95h0M175.90 64.95h0M184.40 64.95h0M192.90 64.95h0M201.40 64.95h0M209.90 64.95h0M218.40 64.95h0M226.90 64.95h0M95.15 69.20h0M103.65 69.20h0M112.15 69.20h0M120.65 69.20h0M129.15 69.20h0M137.65 69.20h0M146.15 69.20h0M154.65 69.20h0M163.15 69.20h0M171.65 69.20h0M180.15 69.20h0M188.65 69.20h0M222.65 69.20h0M231.15 69.20h0M124.90 73.45h0M133.40 73.45h0M141.90 73.45h0M150.40 73.45h0M158.90 73.45h0M235.40 73.45h0M78.15 77.70h0M218.40 107.45h0M124.90 115.95h0"/>
<path stroke="#9c9c9c" stroke-width="3" d="M163.15 52.20h0M171.65 52.20h0M180.15 52.20h0M188.65 52.20h0M197.15 52.20h0M205.65 52.20h0M90.90 56.45h0M99.40 56.45h0M107.90 56.45h0M116.40 56.45h0M124.90 56.45h0M133.40 56.45h0M141.90 56.45h0M150.40 56.45h0M158.90 56.45h0M167.40 56.45h0M175.90 56.45h0M184.40 56.45h0M192.90 56.45h0M201.40 56.45h0M209.90 56.45h0M218.40 56.45h0M226.90 56.45h0M95.15 60.70h0M103.65 60.70h0M112.15 60.70h0M120.65 60.70h0M129.15 60.70h0M137.65 60.70h0M146.15 60.70h0M154.65 60.70h0M163.15 60.70h0M171.65 60.70h0M180.15 60.70h0M188.65 60.70h0M197.15 60.70h0M205.65 60.70h0M214.15 60.70h0M222.65 60.70h0M231.15 60.70h0M116.40 64.95h0M124.90 64.95h0M133.40 64.95h0M141.90 64.95h0M150.40 64.95h0M235.40 64.95h0M61.15 94.70h0M222.65 94.70h0M61.15 103.20h0M129.15 103.20h0M61.15 111.70h0M218.40 115.95h0M61.15 120.20h0M146.15 120.20h0M218.40 124.45h0M61.15 128.70h0M137.65 128.70h0M218.40 132.95h0M61.15 137.20h0M218.40 141.45h0M61.15 145.70h0M218.40 149.95h0M61.15 154.20h0M218.40 158.45h0M61.15 162.70h0"/>
<path stroke="#9c9c9c" stroke-width="3.5" d="M167.40 30.95h0M154.65 35.20h0M163.15 35.20h0M171.65 35.20h0M180.15 35.20h0M141.90 39.45h0M150.40 39.45h0M158.90 39.45h0M167.40 39.45h0M175.90 39.45h0M184.40 39.45h0M192.90 39.45h0M201.40 39.45h0M78.15 43.70h0M86.65 43.70h0M95.15 43.70h0M103.65 43.70h0M112.15 43.70h0M120.65 43.70h0M129.15 43.70h0M137.65 43.70h0M146.15 43.70h0M154.65 43.70h0M163.15 43.70h0M171.65 43.70h0M180.15 43.70h0M188.65 43.70h0M197.15 43.70h0M205.65 43.70h0M214.15 43.70h0M222.65 43.70h0M82.40 47.95h0M90.90 47.95h0M99.40 47.95h0M107.90 47.95h0M116.40 47.95h0M124.90 47.95h0M133.40 47.95h0M141.90 47.95h0M150.40 47.95h0M158.90 47.95h0M167.40 47.95h0M175.90 47.95h0M184.40 47.95h0M192.90 47.95h0M201.40 47.95h0M209.90 47.95h0M218.40 47.95h0M226.90 47.95h0M86.65 52.20h0M95.15 52.20h0M103.65 52.20h0M112.15 52.20h0M120.65 52.20h0M129.15 52.20h0M137.65 52.20h0M146.15 52.20h0M154.65 52.20h0M214.15 52.20h0M222.65 52.20h0M231.15 52.20h0M82.40 73.45h0M65.40 81.95h0M61.15 86.20h0M146.15 111.70h0M141.90 124.45h0"/>
<path stroke="#9c9c9c" stroke-width="4" d="M150.40 -3.05h0M158.90 -3.05h0M167.40 -3.05h0M175.90 -3.05h0M154.65 1.20h0M163.15 1.20h0M171.65 1.20h0M180.15 1.20h0M150.40 5.45h0M158.90 5.45h0M167.40 5.45h0M175.90 5.45h0M146.15 9.70h0M154.65 9.70h0M163.15 9.70h0M171.65 9.70h0M180.15 9.70h0M141.90 13.95h0M150.40 13.95h0M158.90 13.95h0M167.40 13.95h0M175.90 13.95h0M184.40 13.95h0M137.65 18.20h0M146.15 18.20h0M154.65 18.20h0M163.15 18.20h0M171.65 18.20h0M180.15 18.20h0M188.65 18.20h0M197.15 18.20h0M133.40 22.45h0M141.90 22.45h0M150.40 22.45h0M158.90 22.45h0M167.40 22.45h0M175.90 22.45h0M184.40 22.45h0M192.90 22.45h0M201.40 22.45h0M69.65 26.70h0M78.15 26.70h0M86.65 26.70h0M95.15 26.70h0M103.65 26.70h0M112.15 26.70h0M120.65 26.70h0M129.15 26.70h0M137.65 26.70h0M146.15 26.70h0M154.65 26.70h0M163.15 26.70h0M171.65 26.70h0M180.15 26.70h0M188.65 26.70h0M197.15 26.70h0M205.65 26.70h0M214.15 26.70h0M222.65 26.70h0M65.40 30.95h0M73.90 30.95h0M82.40 30.95h0M90.90 30.95h0M99.40 30.95h0M107.90 30.95h0M116.40 30.95h0M124.90 30.95h0M133.40 30.95h0M141.90 30.95h0M150.40 30.95h0M158.90 30.95h0M175.90 30.95h0M184.40 30.95h0M192.90 30.95h0M201.40 30.95h0M209.90 30.95h0M218.40 30.95h0M226.90 30.95h0M69.65 35.20h0M78.15 35.20h0M86.65 35.20h0M95.15 35.20h0M103.65 35.20h0M112.15 35.20h0M120.65 35.20h0M129.15 35.20h0M137.65 35.20h0M146.15 35.20h0M188.65 35.20h0M197.15 35.20h0M205.65 35.20h0M214.15 35.20h0M222.65 35.20h0M73.90 39.45h0M82.40 39.45h0M90.90 39.45h0M99.40 39.45h0M107.90 39.45h0M116.40 39.45h0M124.90 39.45h0M133.40 39.45h0M209.90 39.45h0M218.40 39.45h0M226.90 39.45h0M231.15 43.70h0M73.90 47.95h0M78.15 52.20h0M82.40 56.45h0M235.40 56.45h0M90.90 64.95h0M239.65 77.70h0M235.40 81.95h0M226.90 90.45h0M137.65 103.20h0M222.65 103.20h0M141.90 107.45h0M129.15 111.70h0M222.65 111.70h0M129.15 120.20h0M222.65 120.20h0M133.40 124.45h0M222.65 128.70h0M222.65 137.20h0M222.65 145.70h0M222.65 154.20h0M222.65 162.70h0"/>
<path stroke="#9c9c9c" stroke-width="4.5" d="M65.40 -3.05h0M73.90 -3.05h0M82.40 -3.05h0M90.90 -3.05h0M99.40 -3.05h0M107.90 -3.05h0M116.40 -3.05h0M124.90 -3.05h0M133.40 -3.05h0M141.90 -3.05h0M184.40 -3.05h0M192.90 -3.05h0M201.40 -3.05h0M209.90 -3.05h0M218.40 -3.05h0M69.65 1.20h0M78.15 1.20h0M86.65 1.20h0M95.15 1.20h0M103.65 1.20h0M112.15 1.20h0M120.65 1.20h0M129.15 1.20h0M137.65 1.20h0M146.15 1.20h0M188.65 1.20h0M197.15 1.20h0M205.65 1.20h0M214.15 1.20h0M65.40 5.45h0M73.90 5.45h0M82.40 5.45h0M90.90 5.45h0M99.40 5.45h0M107.90 5.45h0M116.40 5.45h0M124.90 5.45h0M133.40 5.45h0M141.90 5.45h0M184.40 5.45h0M192.90 5.45h0M201.40 5.45h0M209.90 5.45h0M218.40 5.45h0M69.65 9.70h0M78.15 9.70h0M86.65 9.70h0M95.15 9.70h0M103.65 9.70h0M112.15 9.70h0M120.65 9.70h0M129.15 9.70h0M137.65 9.70h0M188.65 9.70h0M197.15 9.70h0M205.65 9.70h0M214.15 9.70h0M65.40 13.95h0M73.90 13.95h0M82.40 13.95h0M90.90 13.95h0M99.40 13.95h0M107.90 13.95h0M116.40 13.95h0M124.90 13.95h0M133.40 13.95h0M192.90 13.95h0M201.40 13.95h0M209.90 13.95h0M218.40 13.95h0M69.65 18.20h0M78.15 18.20h0M86.65 18.20h0M95.15 18.20h0M103.65 18.20h0M112.15 18.20h0M120.65 18.20h0M129.15 18.20h0M205.65 18.20h0M214.15 18.20h0M222.65 18.20h0M65.40 22.45h0M73.90 22.45h0M82.40 22.45h0M90.90 22.45h0M99.40 22.45h0M107.90 22.45h0M116.40 22.45h0M124.90 22.45h0M209.90 22.45h0M218.40 22.45h0M226.90 22.45h0M231.15 35.20h0M69.65 43.70h0M235.40 47.95h0M86.65 60.70h0M86.65 69.20h0M239.65 69.20h0M69.65 77.70h0M231.15 86.20h0M226.90 98.95h0M133.40 107.45h0M226.90 107.45h0M137.65 111.70h0M133.40 115.95h0M141.90 115.95h0M226.90 115.95h0M137.65 120.20h0M226.90 124.45h0M226.90 132.95h0M226.90 141.45h0M226.90 149.95h0M226.90 158.45h0"/>
<path stroke="#9c9c9c" stroke-width="5" d="M222.65 9.70h0"/>
    </g>
  </svg>

  <svg width="0" height="0" style="position:absolute">
    <defs>
      <linearGradient id="uwv" x1="0" y1="0" x2="0" y2="1">
        <stop offset="0" stop-color="#28a0bd"/>
        <stop offset="0.12" stop-color="#1c96b6"/>
        <stop offset="0.26" stop-color="#1087aa"/>
        <stop offset="0.42" stop-color="#0e6b92"/>
        <stop offset="0.58" stop-color="#0f5073"/>
        <stop offset="0.74" stop-color="#0f3d5a"/>
        <stop offset="0.9" stop-color="#0d2f40"/>
        <stop offset="1" stop-color="#0c2935"/>
      </linearGradient>
      <linearGradient id="uwh" x1="0" y1="0" x2="1" y2="0">
        <stop offset="0" stop-color="#000" stop-opacity=".08"/>
        <stop offset="0.4" stop-color="#000" stop-opacity="0"/>
        <stop offset="1" stop-color="#000" stop-opacity=".03"/>
      </linearGradient>
      <radialGradient id="uwlight" cx="0.6" cy="0" r="0.5">
        <stop offset="0" stop-color="#a8e2ee" stop-opacity=".25"/>
        <stop offset="1" stop-color="#a8e2ee" stop-opacity="0"/>
      </radialGradient>
      <symbol id="uw" viewBox="0 0 499 483" preserveAspectRatio="none">
        <rect width="499" height="483" fill="url(#uwv)"/>
        <rect width="499" height="483" fill="url(#uwh)"/>
        <rect width="499" height="180" fill="url(#uwlight)"/>
        <g fill="#d8eef4" opacity=".75">
          <path d="M187 8l8-6 8 6z"/><ellipse cx="262" cy="6" rx="5" ry="2"/><ellipse cx="216" cy="40" rx="7" ry="2"/><ellipse cx="90" cy="15" rx="9" ry="1.6"/><ellipse cx="70" cy="32" rx="7" ry="1.5"/><ellipse cx="257" cy="20" rx="4" ry="2"/><ellipse cx="170" cy="14" rx="8" ry="1.5"/><ellipse cx="266" cy="75" rx="2.5" ry="1.6"/><ellipse cx="282" cy="115" rx="4" ry="1.4"/><ellipse cx="266" cy="136" rx="2" ry="1.2"/><ellipse cx="262" cy="156" rx="2" ry="1.2"/><ellipse cx="270" cy="146" rx="1.5" ry="1"/>
        </g>
        <g fill="#cfeaf2"><ellipse cx="162" cy="4" rx="6.6" ry="0.9" opacity="0.44"/><ellipse cx="182" cy="1" rx="5.6" ry="0.8" opacity="0.40"/><ellipse cx="35" cy="2" rx="5.0" ry="1.8" opacity="0.29"/><ellipse cx="111" cy="22" rx="8.6" ry="1.5" opacity="0.39"/><ellipse cx="487" cy="1" rx="8.0" ry="1.1" opacity="0.30"/><ellipse cx="59" cy="8" rx="7.7" ry="1.0" opacity="0.45"/><ellipse cx="319" cy="10" rx="5.8" ry="0.9" opacity="0.27"/><ellipse cx="103" cy="25" rx="5.0" ry="1.2" opacity="0.45"/><ellipse cx="226" cy="8" rx="7.6" ry="1.6" opacity="0.34"/><ellipse cx="287" cy="16" rx="8.1" ry="1.7" opacity="0.35"/><ellipse cx="489" cy="3" rx="4.9" ry="1.7" opacity="0.30"/><ellipse cx="244" cy="1" rx="6.7" ry="1.7" opacity="0.45"/><ellipse cx="437" cy="8" rx="6.9" ry="1.5" opacity="0.45"/><ellipse cx="228" cy="40" rx="8.6" ry="1.4" opacity="0.48"/><ellipse cx="30" cy="27" rx="6.5" ry="2.0" opacity="0.54"/><ellipse cx="142" cy="11" rx="6.7" ry="0.8" opacity="0.41"/><ellipse cx="84" cy="3" rx="2.4" ry="1.7" opacity="0.30"/><ellipse cx="124" cy="11" rx="8.1" ry="0.9" opacity="0.41"/><ellipse cx="274" cy="47" rx="7.7" ry="1.8" opacity="0.35"/><ellipse cx="207" cy="10" rx="8.2" ry="1.9" opacity="0.30"/><ellipse cx="88" cy="6" rx="3.6" ry="1.4" opacity="0.46"/><ellipse cx="131" cy="0" rx="4.9" ry="1.2" opacity="0.45"/><ellipse cx="476" cy="26" rx="5.6" ry="1.5" opacity="0.49"/><ellipse cx="27" cy="51" rx="7.5" ry="1.8" opacity="0.53"/><ellipse cx="196" cy="11" rx="2.7" ry="1.6" opacity="0.27"/><ellipse cx="34" cy="5" rx="3.1" ry="1.2" opacity="0.27"/><ellipse cx="0" cy="4" rx="2.7" ry="1.2" opacity="0.26"/><ellipse cx="436" cy="21" rx="3.0" ry="1.1" opacity="0.37"/><ellipse cx="182" cy="3" rx="7.9" ry="2.0" opacity="0.41"/><ellipse cx="241" cy="2" rx="2.7" ry="1.2" opacity="0.34"/><ellipse cx="414" cy="4" rx="2.2" ry="1.9" opacity="0.43"/><ellipse cx="73" cy="17" rx="2.2" ry="1.4" opacity="0.59"/><ellipse cx="431" cy="26" rx="3.8" ry="1.2" opacity="0.31"/><ellipse cx="385" cy="17" rx="7.5" ry="1.2" opacity="0.33"/><ellipse cx="425" cy="36" rx="7.7" ry="1.7" opacity="0.33"/><ellipse cx="258" cy="10" rx="2.2" ry="0.8" opacity="0.35"/><ellipse cx="129" cy="26" rx="8.7" ry="1.3" opacity="0.58"/><ellipse cx="493" cy="68" rx="4.6" ry="1.1" opacity="0.33"/><ellipse cx="98" cy="5" rx="6.4" ry="1.9" opacity="0.54"/><ellipse cx="239" cy="23" rx="7.6" ry="0.9" opacity="0.48"/><ellipse cx="454" cy="34" rx="7.3" ry="1.4" opacity="0.31"/><ellipse cx="394" cy="9" rx="7.6" ry="2.0" opacity="0.39"/><ellipse cx="200" cy="65" rx="7.1" ry="1.0" opacity="0.29"/><ellipse cx="75" cy="52" rx="7.6" ry="1.0" opacity="0.54"/></g>
        <!-- sand ripples -->
        <g stroke="#082030" stroke-width="8" fill="none" opacity=".08">
          <path d="M0 320C80 300 160 330 240 318M0 362C90 345 170 375 250 360M0 405C80 390 150 420 230 408M0 448C70 432 150 462 230 450M340 322C400 305 450 325 499 315M360 368C420 352 460 372 499 362M350 414C410 398 460 420 499 410M340 458C400 442 450 466 499 455"/>
        </g>
        <!-- man -->
        <path d="M295 408C272 412 242 422 232 438C226 454 240 468 275 476L332 483H345C346 470 340 462 320 458C295 454 272 450 262 446C272 438 295 430 318 418Z" fill="#243f45"/>
        <path d="M232 430C240 420 258 420 266 430C268 444 262 458 250 462C238 460 230 448 232 430Z" fill="#3f5d62"/>
        <ellipse cx="328" cy="474" rx="12" ry="8" fill="#4d6d72"/>
        <path d="M322 392C338 394 356 400 370 406C374 412 370 417 362 416C346 413 332 410 320 410Z" fill="#38575c"/>
        <path d="M250 270C262 250 285 240 298 270C306 295 308 330 311 352L262 356C256 330 250 300 250 270Z" fill="#5a6667"/>
        <path d="M266 258C280 262 296 280 300 300C303 322 304 338 302 350C290 330 276 300 266 258Z" fill="#7f8984"/>
        <path d="M264 196C268 215 274 235 279 252L272 258C268 240 263 218 260 198Z" fill="#7f8a86"/>
        <path d="M256 280C266 272 282 276 285 292C286 312 284 332 280 345L260 344C256 325 253 300 256 280Z" fill="#9aa399"/>
        <path d="M260 342L282 346L280 358L258 354Z" fill="#111517"/>
        <path d="M238 362C244 350 262 346 274 352L276 372C268 384 250 390 240 384C235 378 235 370 238 362Z" fill="#97a096"/>
        <path d="M258 180C263 176 271 176 276 181C278 186 275 193 270 197H261C258 192 256 185 258 180Z" fill="#a9bdc0" opacity=".6"/>
        <path d="M220 213C228 200 258 198 270 212C277 228 274 252 260 264C242 270 222 260 219 242C218 232 218 222 220 213Z" fill="#12191d"/>
        <path d="M212 226C214 222 222 222 224 227V256C221 260 214 260 212 255Z" fill="#4f9fc8"/>
        <path d="M274 336C290 326 322 328 330 342C336 366 334 392 326 412C310 416 290 414 276 408C272 384 272 360 274 336Z" fill="#1d3669"/>
        <path d="M243 370L254 366C270 400 286 440 300 483H280C266 446 254 408 243 370Z" fill="#0f1317"/>
        <ellipse cx="255" cy="384" rx="8.5" ry="4.5" fill="#bcd0de" opacity=".85"/>
        <ellipse cx="270" cy="418" rx="12.5" ry="6.5" fill="#bcd0de" opacity=".85"/>
      </symbol>
    </defs>
  </svg>

  <!-- image picker panel -->
  <div class="a" style="left:113px;top:351px;width:476px;height:493.5px;background:#fff;border-radius:6px;box-shadow:0 12px 40px rgba(0,0,0,.2),0 1px 3px rgba(0,0,0,.1)"></div>
  <div class="a" style="left:105.5px;top:587px;width:0;height:0;border-top:10px solid transparent;border-bottom:10px solid transparent;border-right:8px solid #fff"></div>
  <div class="a" style="left:133.5px;top:371px;width:161px;height:27px;border-radius:3px;background:#e8e9ea"></div>
  <div class="t" style="left:145.3px;top:378.5px;font-size:12.2px;color:#2a2f34;-webkit-text-stroke:0.25px #2a2f34">Recommended</div>
  <div class="t" style="left:145.3px;top:411px;font-size:12.2px;color:#555a5f">Dreamstate</div>
  <div class="t" style="left:145.3px;top:443px;font-size:12.2px;color:#555a5f">Poster</div>
  <div class="t" style="left:145.3px;top:475.5px;font-size:12.2px;color:#555a5f">Upload your own</div>
  <svg class="a" style="left:318px;top:370px" width="252" height="243.5" viewBox="0 0 252 243.5"><use href="#uw" width="252" height="243.5"/></svg>
  <div class="a" style="left:572.4px;top:370px;width:5.6px;height:80px;border-radius:3px;background:#cfd2d3"></div>
  <svg class="a" style="left:318px;top:620px" width="252" height="204" viewBox="0 0 252 204">
    <defs>
      <linearGradient id="gw" x1="0" y1="0" x2="0" y2="1">
        <stop offset="0" stop-color="#7e959e"/><stop offset="0.45" stop-color="#7f9197"/><stop offset="0.78" stop-color="#7d939b"/><stop offset="1" stop-color="#74a2b4"/>
      </linearGradient>
    </defs>
    <rect width="252" height="204" fill="url(#gw)"/>
    <g stroke="#a9cbd6" stroke-linecap="round" fill="none" opacity=".3">
      <path d="M5 28C30 24 50 26 70 22M90 30C110 27 130 28 150 20M8 65C30 62 50 66 75 58M110 62C125 58 140 56 150 52M100 80C120 76 135 72 150 66M20 40C40 38 60 40 80 36M60 48C80 45 100 46 120 42" stroke-width="2"/>
    </g>
    <g fill="#a5d0de" opacity=".25">
      <rect x="0" y="175" width="160" height="4" rx="2"/><rect x="10" y="186" width="150" height="3" rx="1.5"/><rect x="0" y="195" width="160" height="4" rx="2"/>
    </g>
  </svg>
  <div class="a" style="left:133px;top:753px;width:170px;font-size:10.6px;line-height:14px;color:#9a9ea2">Choose from over 2 million free images provided by <span style="text-decoration:underline">Unsplash</span></div>
  <div class="a" style="left:133.4px;top:797.6px;width:161.2px;height:26.5px;border:1px solid #666a6e;border-radius:2px;background:#fff"></div>
  <div class="a" style="left:141.5px;top:803.5px;width:1px;height:14px;background:#333"></div>
  <div class="t" style="left:142.5px;top:805.5px;font-size:10.6px;color:#a9adb0">Search images...</div>
  <svg class="a" style="left:275px;top:804px" width="12" height="13" viewBox="0 0 12 13" fill="none" stroke="#b5b8bb" stroke-width="1.2"><circle cx="5.5" cy="6" r="3.8"/><path d="M8.3 8.8l2.4 2.4"/></svg>

  <!-- large image -->
  <div class="a" style="left:478px;top:394px;width:499px;height:483.5px;box-shadow:0 20px 50px rgba(0,0,0,.3),0 2px 6px rgba(0,0,0,.12)"></div>
  <svg class="a" style="left:478px;top:394px" width="499" height="483.5" viewBox="0 0 499 483.5"><use href="#uw" width="499" height="483.5"/></svg>

  <!-- cursor -->
  <svg class="a" style="left:845px;top:545px" width="40" height="50" viewBox="0 0 40 50"><path d="M12.8 8.7V37.2L18.6 31.2L23.2 39.4C23.7 40.3 24.6 40.6 25.5 40.1L27.4 39.1C28.3 38.6 28.6 37.7 28.1 36.8L23.6 28.8H31.8Z" fill="#000" stroke="#fff" stroke-width="2.3" stroke-linejoin="round"/></svg>
</div>
</body></html>
